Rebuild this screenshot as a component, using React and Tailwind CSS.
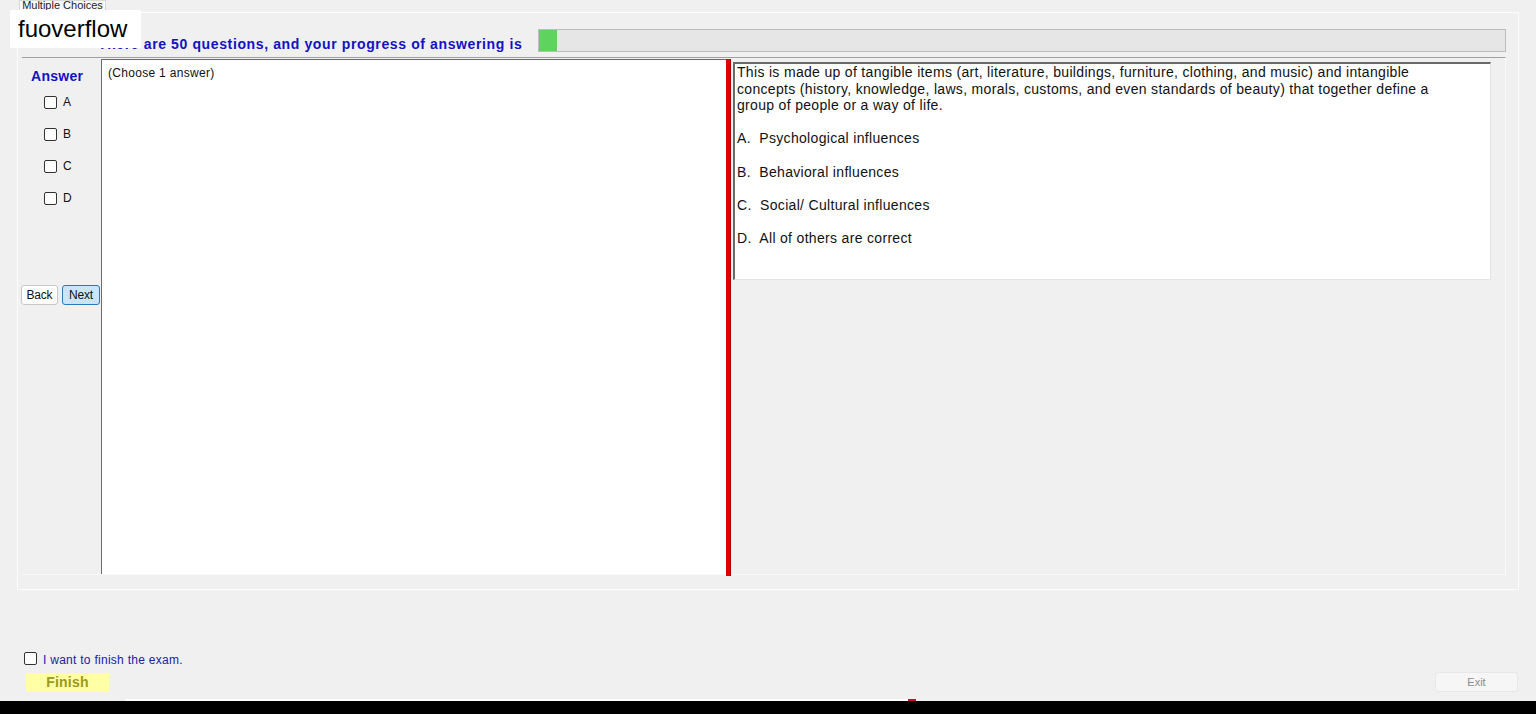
import React from "react";

function Box({className = ""}) {
  return <div className={"w-[13px] h-[13px] shrink-0 rounded-[2px] border border-[#333] bg-white " + className}></div>;
}

function Choice({letter}) {
  return (
    <div className="h-[32px] flex items-start pl-[22px]">
      <Box />
      <span className="ml-[6px] text-[12px] leading-[13px] text-[#111]">{letter}</span>
    </div>
  );
}

const lines = [
  "This is made up of tangible items (art, literature, buildings, furniture, clothing, and music) and intangible",
  "concepts (history, knowledge, laws, morals, customs, and even standards of beauty) that together define a",
  "group of people or a way of life.",
];

const options = [
  "A.  Psychological influences",
  "B.  Behavioral influences",
  "C.  Social/ Cultural influences",
  "D.  All of others are correct",
];

export default function App() {
  return (
    <div className="relative w-[1536px] h-[714px] overflow-hidden bg-[#f0f0f0] flex flex-col font-['Liberation_Sans',Arial,sans-serif]">
      {/* tab strip */}
      <div className="h-[12px] flex pl-[19px] shrink-0">
        <div className="w-[87px] h-[12px] bg-[#fafafa] border-x border-t border-[#d9d9d9] overflow-hidden text-[11px] leading-[9px] text-[#222] text-center whitespace-nowrap">
          Multiple Choices
        </div>
      </div>

      {/* tab page */}
      <div className="ml-[17px] w-[1502px] h-[578px] shrink-0 border border-[#fcfcfc] flex flex-col">
        <div className="h-[44px] flex items-start pl-[80px] shrink-0">
          <div className="w-[440px] pt-[23px] text-[14px] leading-[16px] font-bold tracking-[0.62px] text-[#1212c4] whitespace-nowrap">
            There are 50 questions, and your progress of answering is
          </div>
          <div className="mt-[16px] w-[968px] h-[23px] bg-[#e6e6e6] border border-[#bcbcbc] flex">
            <div className="w-[18px] h-full bg-[#5ed35e]"></div>
          </div>
        </div>

        <div className="ml-[4px] w-[1484px] h-[518px] border-t border-[#a0a0a0] border-r border-b border-r-[#fafafa] border-b-[#fafafa] flex">
          {/* answer column */}
          <div className="w-[79px] shrink-0 flex flex-col">
            <div className="mt-[10px] pl-[9px] text-[14px] leading-[16px] font-bold tracking-[0.3px] text-[#1212c4]">Answer</div>
            <div className="mt-[12px]">
              <Choice letter="A" />
              <Choice letter="B" />
              <Choice letter="C" />
              <Choice letter="D" />
            </div>
            <div className="mt-[61px] -ml-[1px] flex gap-[4px]">
              <button className="w-[37px] h-[20px] bg-white border border-[#c8c8c8] rounded-[3px] text-[12px] leading-[18px] tracking-[-0.2px] text-[#111]">Back</button>
              <button className="w-[38px] h-[20px] bg-[#cce4f7] border border-[#2a78b8] rounded-[3px] text-[12px] leading-[18px] tracking-[-0.2px] text-[#111]">Next</button>
            </div>
          </div>

          {/* left white pane */}
          <div className="mt-[1px] w-[625px] h-[515px] shrink-0 bg-white border-l border-t border-[#6d6d6d] pl-[6px] pt-[6px]">
            <div className="text-[12px] leading-[14px] tracking-[0.3px] text-[#111]">(Choose 1 answer)</div>
          </div>

          {/* splitter */}
          <div className="mt-[1px] w-[5px] h-[517px] shrink-0 bg-[#e00000] border-r border-[#b00000]"></div>

          {/* right pane */}
          <div className="flex-1 pt-[4px] pl-[2px]">
            <div className="w-[758px] h-[218px] bg-white border-l-2 border-t-2 border-[#6a6a6a] border-r border-b border-r-[#e4e4e4] border-b-[#e4e4e4] pl-[2px] text-[14px] leading-[16.6px] tracking-[0.32px] text-[#111]">
              {lines.map((l, i) => (
                <div key={i} className="whitespace-nowrap">{l}</div>
              ))}
              {options.map((o, i) => (
                <div key={i} className="mt-[16.6px] whitespace-pre">{o}</div>
              ))}
            </div>
          </div>
        </div>
      </div>

      {/* bottom */}
      <div className="flex-1 flex flex-col">
        <div className="flex-1"></div>
        <div className="h-[14px] flex items-center pl-[24px]">
          <Box />
          <span className="ml-[6px] mt-[3px] text-[12px] leading-[14px] tracking-[0.27px] text-[#2020a8]">I want to finish the exam.</span>
        </div>
        <div className="mt-[7px] h-[21px] flex items-start">
          <button className="ml-[26px] mt-[1px] w-[83px] h-[19px] bg-[#ffffa6] text-[14px] leading-[19px] font-bold tracking-[0.2px] text-[#9a9a1c]">Finish</button>
          <button className="ml-auto mr-[18px] w-[83px] h-[20px] bg-[#f6f6f6] border border-[#e8e8e8] rounded-[3px] text-[11px] leading-[18px] text-[#8c8c8c]">Exit</button>
        </div>
        <div className="mt-[6px] h-[2px] flex">
          <div className="ml-[126px] w-[782px] h-full bg-white"></div>
          <div className="w-[8px] h-full bg-[#c8102e]"></div>
        </div>
        <div className="h-[13px] bg-black"></div>
      </div>

      {/* watermark label */}
      <div className="absolute left-[10px] top-[10px] w-[131px] h-[38px] bg-white pl-[8px] text-[24px] leading-[38px] text-black">
        fuoverflow
      </div>
    </div>
  );
}
